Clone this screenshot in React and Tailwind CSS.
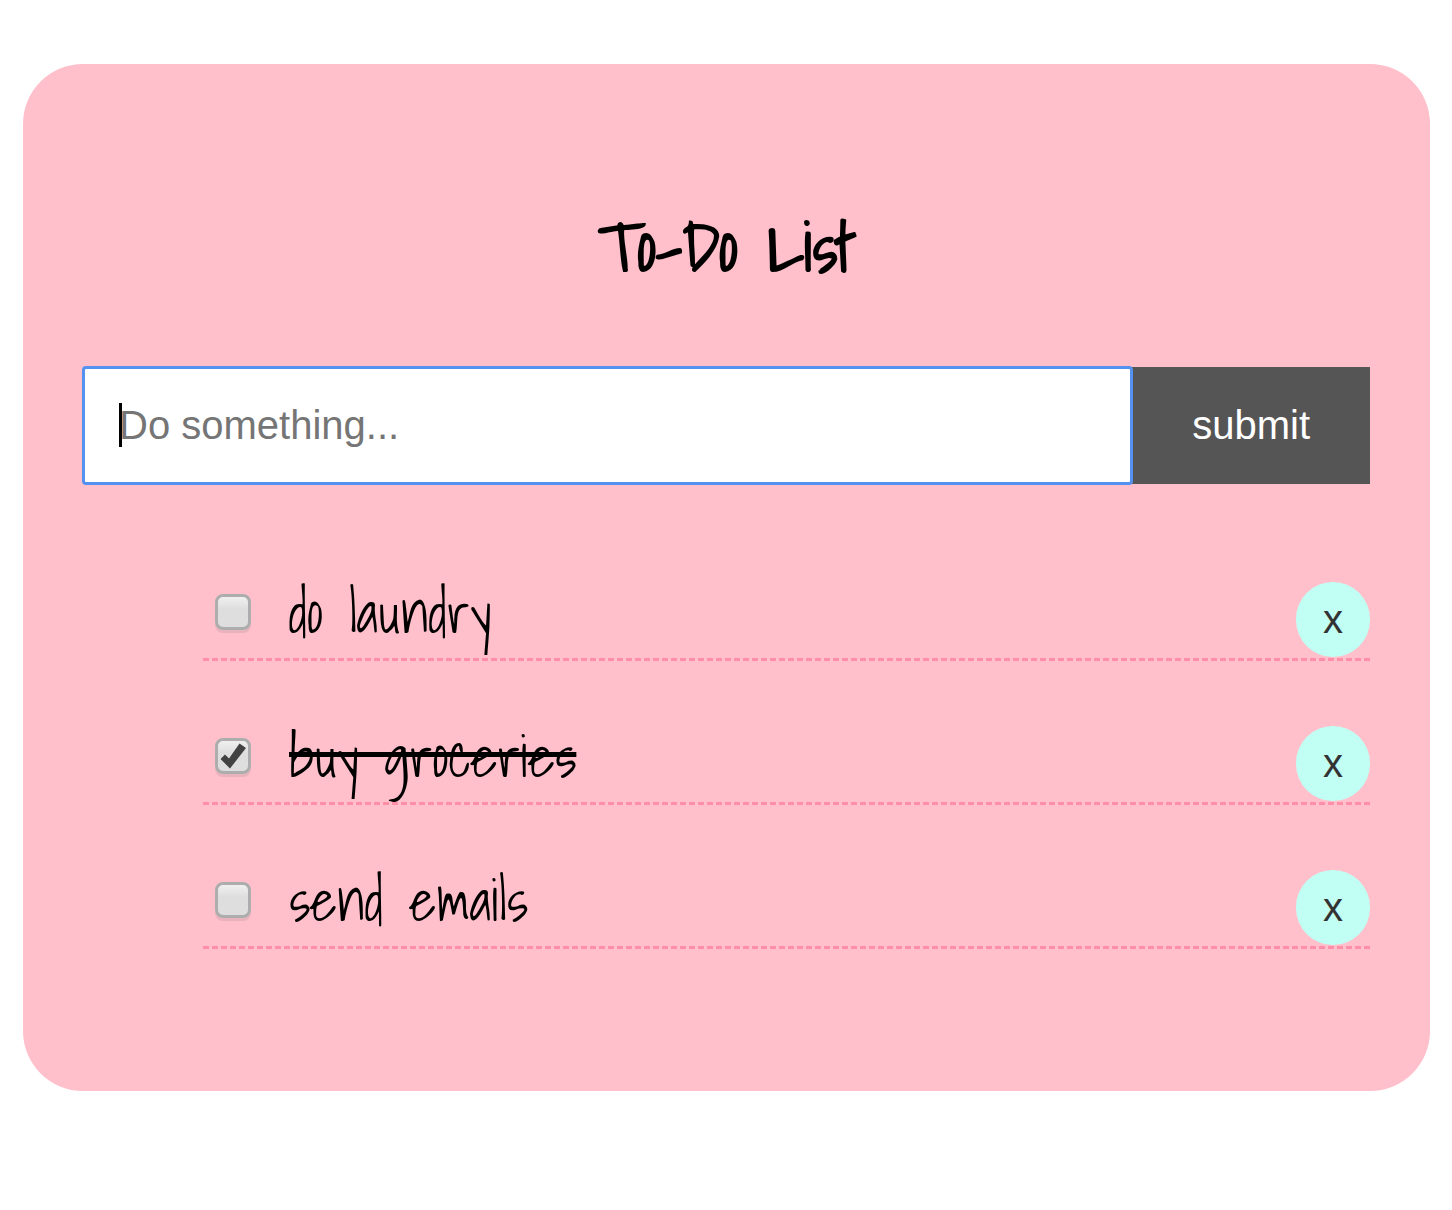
import { useState } from "react";

const initialItems = [
  { id: "laundry", label: "do laundry", done: false },
  { id: "groceries", label: "buy groceries", done: true },
  { id: "emails", label: "send emails", done: false },
];

function TodoItem({ item, onToggle, onRemove }) {
  return (
    <li className="mb-[65px] flex h-[79px] items-start border-b-3 border-dashed border-[#ff8fa8] pl-3 last:mb-0">
      <span className="relative mt-3 size-9 shrink-0">
        <input
          id={item.id}
          type="checkbox"
          checked={item.done}
          onChange={() => onToggle(item.id)}
          className="block size-9 appearance-none rounded-[8px] border-3 border-[#adadad] bg-linear-to-b from-[#f0f0f0] to-[#dedede] to-40% shadow-[0_3px_0_#e9b3bd]"
        />
        {item.done && (
          <svg viewBox="0 0 36 36" className="pointer-events-none absolute inset-0 size-9" aria-hidden="true">
            <path d="M5.500 21 L10 16.500 L14 20.500 L24.500 5.500 L31 10 L15 30.500 Z" fill="#424242" />
          </svg>
        )}
      </span>
      <label
        htmlFor={item.id}
        className={
          item.done
            ? "ml-[38px] grow text-[58px] leading-[60px] whitespace-nowrap line-through decoration-[5px]"
            : "ml-[38px] grow text-[58px] leading-[60px] whitespace-nowrap"
        }
      >
        {item.label}
      </label>
      <button
        type="button"
        onClick={() => onRemove(item.id)}
        aria-label={"Remove " + item.label}
        className="h-[75px] w-[74px] shrink-0 rounded-full bg-[#c1fff4] font-['Liberation_Sans',Arial,sans-serif] text-[40px] leading-[75px] text-[#333]"
      >
        x
      </button>
    </li>
  );
}

export default function App() {
  const [items, setItems] = useState(initialItems);
  const [draft, setDraft] = useState("");

  const toggle = (id) => setItems(items.map((i) => (i.id === id ? { ...i, done: !i.done } : i)));
  const remove = (id) => setItems(items.filter((i) => i.id !== id));
  const add = (e) => {
    e.preventDefault();
    if (!draft.trim()) return;
    setItems([...items, { id: "item-" + Date.now(), label: draft, done: false }]);
    setDraft("");
  };

  return (
    <div className="min-h-screen bg-white pt-16 pb-16">
      <main className="mr-[22px] ml-[23px] rounded-[60px] bg-[#ffc0cb] px-[60px] pt-[140px] pb-[142px] font-['Shadows_Into_Light','Liberation_Sans_Narrow','Liberation_Sans',sans-serif] text-black">
        <h1 className="text-center text-[67px] leading-[84px] font-bold">To-Do List</h1>

        <form onSubmit={add} className="mt-[79px] flex h-[117px] font-['Liberation_Sans',Arial,sans-serif] text-[40px]">
          <div className="relative min-w-0 grow">
            <input
              type="text"
              aria-label="New task"
              placeholder="Do something..."
              value={draft}
              onChange={(e) => setDraft(e.target.value)}
              className="h-full w-full rounded-[3px] bg-white px-9 outline-3 -outline-offset-2 outline-[#5491f0] placeholder:text-[#757575]"
            />
            {!draft && <span className="pointer-events-none absolute top-9 left-9 h-11 w-[3px] bg-black" />}
          </div>
          <button type="submit" className="shrink-0 bg-[#555] px-[60px] pb-0.5 text-white">
            submit
          </button>
        </form>

        <ul className="mt-[98px] ml-[120px]">
          {items.map((item) => (
            <TodoItem key={item.id} item={item} onToggle={toggle} onRemove={remove} />
          ))}
        </ul>
      </main>
    </div>
  );
}
